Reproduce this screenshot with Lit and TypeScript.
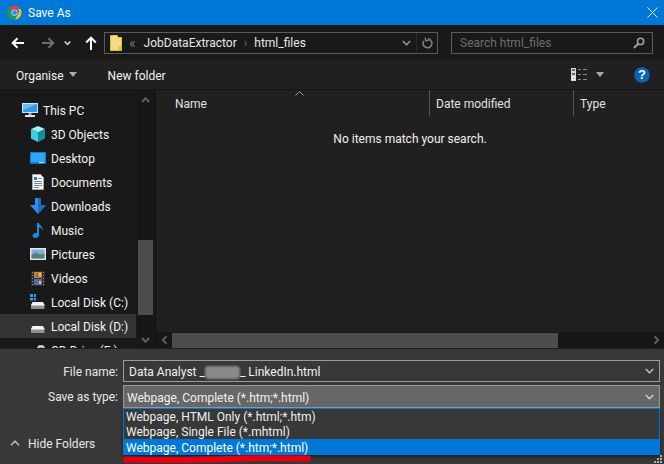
import { LitElement, html, css, svg } from "lit";
import { customElement } from "lit/decorators.js";

/* ── Icons ───────────────────────────────────────────────────────────── */

const chromeIcon = html`<svg width="15" height="15" viewBox="0 0 15 15">
  <path d="M7.5.5a7 7 0 0 1 6.1 3.5H7.5a3.5 3.5 0 0 0-3.3 2.2L2 2.6A7 7 0 0 1 7.5.5z" fill="#db4437" />
  <path d="M13.6 4a7 7 0 0 1-5.7 10.5L11 9.3A3.5 3.5 0 0 0 10.6 4z" fill="#f4c20d" />
  <path d="M7.9 14.5A7 7 0 0 1 2 2.6l3 5.2a3.5 3.5 0 0 0 3.7 2.9z" fill="#0f9d58" />
  <circle cx="7.5" cy="7.5" r="3.1" fill="#fff" />
  <circle cx="7.5" cy="7.5" r="2.5" fill="#4285f4" />
</svg>`;

const arrowLeft = (color: string) => html`<svg width="14" height="12" viewBox="0 0 14 12" fill="none" stroke=${color} stroke-width="2">
  <path d="M13 6H2M6.5 1.2 1.7 6l4.8 4.8" />
</svg>`;

const arrowRight = (color: string) => html`<svg width="14" height="12" viewBox="0 0 14 12" fill="none" stroke=${color} stroke-width="2">
  <path d="M1 6h11M7.5 1.2 12.3 6l-4.8 4.8" />
</svg>`;

const arrowUp = html`<svg width="12" height="14" viewBox="0 0 12 14" fill="none" stroke="#fff" stroke-width="2">
  <path d="M6 14V2M1.2 6.5 6 1.7l4.8 4.8" />
</svg>`;

const chevron = (color: string, w = 9, sw = 1.5) => html`<svg width=${w} height="6" viewBox="0 0 9 6" fill="none" stroke=${color} stroke-width=${sw}>
  <path d="M.8 1 4.5 4.7 8.2 1" />
</svg>`;

const chevronUp = html`<svg width="10" height="6" viewBox="0 0 10 6" fill="none" stroke="#b8b8b8" stroke-width="1.6">
  <path d="M1 5.2 5 1.2l4 4" />
</svg>`;

const caret = html`<svg width="8" height="5" viewBox="0 0 8 5"><path d="M0 0h8L4 5z" fill="#aaa" /></svg>`;

const folderIcon = html`<svg width="12" height="16" viewBox="0 0 12 16">
  <path d="M.5.5h7v2h4v13H.5z" fill="#f6dc84" stroke="#e0b93f" />
  <path d="M8.5 11.5h3v4h-3z" fill="#e0b93f" />
</svg>`;

const refreshIcon = html`<svg width="12" height="12" viewBox="0 0 12 12" fill="none" stroke="#7f7f7f" stroke-width="1.6">
  <path d="M6.8 1.9A4.4 4.4 0 1 1 2.7 4" />
  <path d="M4.4.3v3.2h3.2" stroke-width="1.3" transform="rotate(-8 6 2)" />
</svg>`;

const searchIcon = html`<svg width="12" height="12" viewBox="0 0 12 12" fill="none" stroke="#a0a0a0">
  <circle cx="7.6" cy="4.4" r="3.1" stroke-width="1.6" />
  <path d="M5.2 6.8 1 11" stroke-width="2" />
</svg>`;

const viewIcon = html`<svg width="16" height="13" viewBox="0 0 16 13">
  <path d="M0 0h5v13H0z" fill="#d8d8d8" />
  <path d="M1 1h3v2H1zM1 5h3v2H1z" fill="#666" />
  <path d="M1 9h3v3H1z" fill="#fff" />
  <path d="M2 10h1v1H2z" fill="#d22" />
  <path d="M7 1h3v1H7zM12 1h4v1h-4zM7 6h3v1H7zM12 6h4v1h-4zM7 11h3v1H7zM12 11h4v1h-4z" fill="#8a8a8a" />
</svg>`;

const helpIcon = html`<svg width="16" height="16" viewBox="0 0 16 16">
  <circle cx="8" cy="8" r="7.8" fill="#0a64b8" />
  <text x="8" y="12.4" text-anchor="middle" font-family="Liberation Sans, sans-serif" font-size="13" font-weight="700" fill="#fff">?</text>
</svg>`;

const pcIcon = html`<svg width="16" height="16" viewBox="0 0 16 16">
  <path d="M0 1h16v10H0z" fill="#cfe4f2" />
  <path d="M1 2h14v8H1z" fill="#2f9be8" />
  <path d="M1 2h14L1 8z" fill="#69bdf2" />
  <path d="M6.5 11h3v2h-3z" fill="#9fb4c2" />
  <path d="M3 13h10v2H3z" fill="#dde6ec" />
</svg>`;

const cubeIcon = html`<svg width="16" height="16" viewBox="0 0 16 16">
  <path d="M8 0l7 3-7 3.4L1 3z" fill="#a6f0ee" />
  <path d="M1 3l7 3.4V16l-7-3.4z" fill="#3fd0d6" />
  <path d="M15 3 8 6.4V16l7-3.4z" fill="#0d8fa6" />
</svg>`;

const desktopIcon = html`<svg width="16" height="12" viewBox="0 0 16 12">
  <path d="M0 0h16v12H0z" fill="#0b79d6" />
  <path d="M1 1h14v9H1z" fill="#2ea6f5" />
  <path d="M9 10h5v1H9z" fill="#bfe3fb" />
</svg>`;

const docIcon = html`<svg width="12" height="16" viewBox="0 0 12 16">
  <path d="M.5.5h8l3 3v12H.5z" fill="#f4f4f4" stroke="#a8a8a8" />
  <path d="M2 3h3v3H2z" fill="#2b7cc4" />
  <path d="M6 4h4v1H6zM2 7h8v1H2zM2 9h8v1H2zM2 11h8v1H2zM2 13h5v1H2z" fill="#7d8a96" />
</svg>`;

const downloadIcon = html`<svg width="16" height="16" viewBox="0 0 16 16">
  <path d="M5 0h6v7h5l-8 9-8-9h5z" fill="#2f8fe6" />
  <path d="M8 0h3v7h5l-8 9z" fill="#1a6fc2" />
</svg>`;

const musicIcon = html`<svg width="12" height="15" viewBox="0 0 12 15">
  <path d="M5 0h2c.3 2.7 4.5 3.5 4 7.5C10 5 8.5 4.500 7 4.200V12c0 1.800-1.800 3-3.700 3C1.600 15 .5 14 .5 12.800c0-1.500 1.800-2.700 3.200-2.700.5 0 .9.1 1.300.3z" fill="#1f8ae6" />
</svg>`;

const pictureIcon = html`<svg width="16" height="12" viewBox="0 0 16 12">
  <path d="M0 0h16v12H0z" fill="#e4e8ec" />
  <path d="M1.5 1.5h13v9h-13z" fill="#7fb0d4" />
  <path d="M1.5 7 6 4.5l4 2 4.5-1v5h-13z" fill="#56807c" />
</svg>`;

const videoIcon = html`<svg width="14" height="15" viewBox="0 0 14 15">
  <path d="M0 0h14v15H0z" fill="#2d2d2d" />
  <path d="M3 1h8v6H3z" fill="#b98a3e" />
  <path d="M3 8h8v6H3z" fill="#4d6fb8" />
  <path d="M5 3h2v3H5z" fill="#c83f7a" />
  <path d="M8 2h2v3H8zM8 10h2v3H8z" fill="#e6c63c" />
  <path d="M1 1h1v1H1zM1 4h1v1H1zM1 7h1v1H1zM1 10h1v1H1zM1 13h1v1H1zM12 1h1v1h-1zM12 4h1v1h-1zM12 7h1v1h-1zM12 10h1v1h-1zM12 13h1v1h-1z" fill="#999" />
</svg>`;

const driveBody = svg`
  <path d="M2.5 8H13l1.500 3H1z" fill="#f2f2f2" />
  <path d="M1 11h13.500v4H1z" fill="#8f8f8f" />
  <path d="M1 11h13.500v1H1z" fill="#c8c8c8" />
  <path d="M11 13h2v1h-2z" fill="#35e04f" />
`;

const driveCIcon = html`<svg width="16" height="16" viewBox="0 0 16 16">
  ${driveBody}
  <path d="M0 0h3v3H0zM4 0h2v3H4zM0 4h3v2.5H0zM4 4h2v2.5H4z" fill="#18a4ee" />
</svg>`;

const driveIcon = html`<svg width="16" height="16" viewBox="0 0 16 16">${driveBody}</svg>`;

const cdIcon = html`<svg width="16" height="16" viewBox="0 0 16 16">
  <circle cx="11" cy="7" r="4" fill="#cfcfcf" />
  <circle cx="11" cy="7" r="1.5" fill="#333" />
</svg>`;

/* ── Data ────────────────────────────────────────────────────────────── */

const NAV_ITEMS = [
  { label: "This PC", icon: pcIcon, top: true },
  { label: "3D Objects", icon: cubeIcon },
  { label: "Desktop", icon: desktopIcon },
  { label: "Documents", icon: docIcon },
  { label: "Downloads", icon: downloadIcon },
  { label: "Music", icon: musicIcon },
  { label: "Pictures", icon: pictureIcon },
  { label: "Videos", icon: videoIcon },
  { label: "Local Disk (C:)", icon: driveCIcon },
  { label: "Local Disk (D:)", icon: driveIcon, selected: true },
  { label: "CD Drive (E:)", icon: cdIcon },
];

const FILE_TYPES = [
  "Webpage, HTML Only (*.html;*.htm)",
  "Webpage, Single File (*.mhtml)",
  "Webpage, Complete (*.htm;*.html)",
];

/* ── Component ───────────────────────────────────────────────────────── */

@customElement("app-root")
export class AppRoot extends LitElement {
  static styles = css`
    :host {
      display: block;
      width: 664px;
      height: 464px;
      overflow: hidden;
      font-family: Roboto, "Noto Sans", sans-serif;
      font-size: 12px;
      color: #f0f0f0;
      background: #202020;
    }

    svg {
      display: block;
      flex: none;
    }

    /* nudges Roboto down a pixel to sit on the reference baseline */
    .t {
      padding-top: 2px;
    }

    .dialog {
      display: flex;
      flex-direction: column;
      height: 464px;
    }

    .title {
      display: flex;
      align-items: center;
      height: 25px;
      flex: none;
      padding: 0 6px 0 7px;
      gap: 6px;
      background: #0078d7;
      color: #fff;
    }

    .title .close {
      margin-left: auto;
    }

    .nav {
      display: flex;
      align-items: center;
      height: 35px;
      flex: none;
      background: #191919;
      padding: 0 11px;
    }

    .nav .back {
      margin-right: 16px;
    }

    .nav .forward {
      margin-right: 9px;
    }

    .nav .recent {
      margin-right: 14px;
    }

    .address {
      display: flex;
      align-items: center;
      width: 334px;
      height: 22px;
      box-sizing: border-box;
      margin-left: 7px;
      padding: 0 0 0 5px;
      border: 1px solid #5a5a5a;
      color: #e8e8e8;
    }

    .crumb-sep {
      color: #777;
    }

    .crumb-sep.first {
      margin: 0 8px 0 7px;
      font-size: 14px;
    }

    .crumb-sep.mid {
      margin: 0 7px;
    }

    .address .drop {
      margin-left: auto;
      margin-right: 5px;
    }

    .address .refresh {
      display: flex;
      align-items: center;
      justify-content: center;
      width: 20px;
      height: 20px;
      border-left: 1px solid #2b2b2b;
    }

    .search {
      display: flex;
      align-items: center;
      justify-content: space-between;
      width: 202px;
      height: 22px;
      box-sizing: border-box;
      margin-left: 13px;
      padding: 0 7px 0 8px;
      border: 1px solid #5a5a5a;
      color: #6e6e6e;
    }

    .commands {
      display: flex;
      align-items: center;
      height: 30px;
      flex: none;
      padding: 0 14px 0 16px;
      background: #202020;
      box-sizing: border-box;
      border-bottom: 1px solid #151515;
    }

    .organise {
      display: flex;
      align-items: center;
      gap: 5px;
      margin-right: 31px;
    }

    .view {
      display: flex;
      align-items: center;
      gap: 9px;
      margin-left: auto;
      margin-right: 30px;
    }

    .main {
      display: flex;
      flex: 1;
      min-height: 0;
    }

    .tree {
      display: flex;
      width: 155px;
      flex: none;
      background: #191919;
      border-right: 1px solid #111;
    }

    .tree-list {
      width: 136px;
      margin-right: 1px;
      flex: none;
      overflow: hidden;
      padding-top: 8px;
      box-sizing: border-box;
    }

    .row {
      display: flex;
      align-items: center;
      height: 24px;
      padding-left: 30px;
      gap: 5px;
      color: #f2f2f2;
    }

    .row.top {
      padding-left: 22px;
    }

    .row .ico {
      display: flex;
      align-items: center;
      justify-content: center;
      width: 16px;
      height: 16px;
      flex: none;
    }

    .row.selected {
      background: #333;
    }

    .vscroll {
      display: flex;
      flex-direction: column;
      align-items: flex-end;
      width: 16px;
      flex: none;
      background: #171717;
    }

    .vscroll .cap {
      display: flex;
      align-items: center;
      justify-content: center;
      width: 16px;
      height: 16px;
      flex: none;
    }

    .vscroll .cap.up {
      margin-top: 2px;
      transform: scaleY(-1);
    }

    .vscroll .thumb {
      width: 15px;
      height: 75px;
      margin-top: 132px;
      margin-bottom: 17px;
      flex: none;
      background: #4d4d4d;
    }

    .files {
      display: flex;
      flex-direction: column;
      flex: 1;
      min-width: 0;
      position: relative;
    }

    .header {
      display: grid;
      grid-template-columns: 274px 144px 1fr;
      height: 26px;
      flex: none;
      color: #e2e2e2;
    }

    .header > div {
      display: flex;
      align-items: center;
      padding-left: 6px;
      border-right: 1px solid #555;
    }

    .header > div:first-child {
      padding-left: 19px;
    }

    .header > div:last-child {
      border-right: 0;
    }

    .sort {
      position: absolute;
      left: 139px;
      top: 1px;
    }

    .empty {
      flex: 1;
      text-align: center;
      padding-top: 16px;
      color: #f0f0f0;
    }

    .hscroll {
      display: flex;
      align-items: center;
      height: 16px;
      flex: none;
      background: #171717;
    }

    .hscroll .cap {
      display: flex;
      align-items: center;
      justify-content: center;
      width: 16px;
      height: 16px;
      flex: none;
    }

    .hscroll .thumb {
      width: 386px;
      height: 15px;
      margin-top: 1px;
      flex: none;
      background: #4d4d4d;
    }

    .hscroll .cap.end {
      margin-left: auto;
    }

    .cap.left svg {
      transform: rotate(90deg);
    }

    .cap.right svg {
      transform: rotate(-90deg);
    }

    .footer {
      height: 116px;
      flex: none;
      box-sizing: border-box;
      padding: 12px 4px 0 0;
      background: #383838;
      position: relative;
      border-top: 1px solid #1c1c1c;
    }

    .form {
      display: grid;
      grid-template-columns: 118px 1fr;
      grid-auto-rows: 22px;
      column-gap: 5px;
      row-gap: 3px;
      margin-top: -1px;
    }

    .form label {
      display: flex;
      align-items: center;
      justify-content: flex-end;
      color: #e8e8e8;
    }

    .field {
      display: flex;
      align-items: center;
      justify-content: space-between;
      box-sizing: border-box;
      padding: 0 5px;
      border: 1px solid #9b9b9b;
      color: #f2f2f2;
    }

    .blur {
      display: inline-block;
      width: 35px;
      height: 13px;
      border-radius: 4px;
      background: #8a8a8a;
      filter: blur(1px);
      vertical-align: -3px;
    }

    .combo {
      position: relative;
      height: 23px;
      padding-left: 3px;
      background: #676767;
      border-color: #999;
    }

    .dropdown {
      position: absolute;
      left: -1px;
      right: -1px;
      top: 22px;
      border: 1px solid #0078d7;
      border-bottom: 0;
      background: #383838;
      box-shadow: 0 2px 3px rgba(0, 0, 0, 0.45);
    }

    .option {
      height: 15px;
      line-height: 17px;
      padding-left: 2px;
      color: #f0f0f0;
    }

    .option.active {
      height: 16px;
      line-height: 18px;
      background: #0078d7;
      color: #fff;
    }

    .scribble {
      position: absolute;
      left: 123px;
      top: 106px;
    }

    .hide {
      display: flex;
      align-items: center;
      gap: 8px;
      height: 20px;
      margin-top: 26px;
      padding-left: 10px;
      color: #e8e8e8;
    }

    .grip {
      position: absolute;
      right: 1px;
      bottom: 0;
    }
  `;

  render() {
    return html`
      <div class="dialog">
        <div class="title">
          ${chromeIcon}
          <span>Save As</span>
          <svg class="close" width="11" height="11" viewBox="0 0 11 11" fill="none" stroke="#fff">
            <path d="M.5.5l10 10M10.5.5l-10 10" />
          </svg>
        </div>

        <div class="nav">
          <span class="back">${arrowLeft("#fff")}</span>
          <span class="forward">${arrowRight("#6d6d6d")}</span>
          <span class="recent">${chevron("#d0d0d0", 7, 2)}</span>
          ${arrowUp}
          <div class="address">
            ${folderIcon}
            <span class="crumb-sep first">«</span>
            <span>JobDataExtractor</span>
            <span class="crumb-sep mid">›</span>
            <span>html_files</span>
            <span class="drop">${chevron("#9a9a9a")}</span>
            <span class="refresh">${refreshIcon}</span>
          </div>
          <div class="search"><span>Search html_files</span>${searchIcon}</div>
        </div>

        <div class="commands">
          <div class="organise"><span class="t">Organise</span>${caret}</div>
          <span class="t">New folder</span>
          <div class="view">${viewIcon}${caret}</div>
          ${helpIcon}
        </div>

        <div class="main">
          <div class="tree">
            <div class="tree-list">
              ${NAV_ITEMS.map(
                (item) => html`
                  <div class="row ${item.top ? "top" : ""} ${item.selected ? "selected" : ""}">
                    <span class="ico">${item.icon}</span>
                    <span class="t">${item.label}</span>
                  </div>
                `,
              )}
            </div>
            <div class="vscroll">
              <div class="cap up">${chevron("#5e5e5e", 9, 2)}</div>
              <div class="thumb"></div>
              <div class="cap">${chevron("#5e5e5e", 9, 2)}</div>
            </div>
          </div>

          <div class="files">
            <div class="header">
              <div><span class="t">Name</span></div>
              <div><span class="t">Date modified</span></div>
              <div><span class="t">Type</span></div>
            </div>
            <svg class="sort" width="9" height="5" viewBox="0 0 9 5" fill="none" stroke="#9a9a9a">
              <path d="M.5 4.5l4-4 4 4" />
            </svg>
            <div class="empty">No items match your search.</div>
            <div class="hscroll">
              <div class="cap left">${chevron("#5e5e5e", 9, 2)}</div>
              <div class="thumb"></div>
              <div class="cap right end">${chevron("#5e5e5e", 9, 2)}</div>
            </div>
          </div>
        </div>

        <div class="footer">
          <div class="form">
            <label><span class="t">File name:</span></label>
            <div class="field">
              <span class="t">Data Analyst _<span class="blur"></span>_ LinkedIn.html</span>
              ${chevron("#c0c0c0")}
            </div>
            <label><span class="t">Save as type:</span></label>
            <div class="field combo">
              <span class="t">${FILE_TYPES[2]}</span>
              ${chevron("#d0d0d0")}
              <div class="dropdown">
                ${FILE_TYPES.map(
                  (type, i) => html`<div class="option ${i === 2 ? "active" : ""}">${type}</div>`,
                )}
              </div>
            </div>
          </div>
          <div class="hide">${chevronUp}<span class="t">Hide Folders</span></div>
          <svg class="scribble" width="188" height="8" viewBox="0 0 188 8" fill="none" stroke="#e60012" stroke-width="6" stroke-linecap="round">
            <path d="M3 4.500C40 5.500 90 4.500 120 3.500 150 3 170 3 185 3.500" />
          </svg>
          <svg class="grip" width="9" height="9" viewBox="0 0 9 9" fill="#b0b0b0">
            <path d="M6 0h2v2H6zM3 3h2v2H3zM6 3h2v2H6zM0 6h2v2H0zM3 6h2v2H3zM6 6h2v2H6z" />
          </svg>
        </div>
      </div>
    `;
  }
}
